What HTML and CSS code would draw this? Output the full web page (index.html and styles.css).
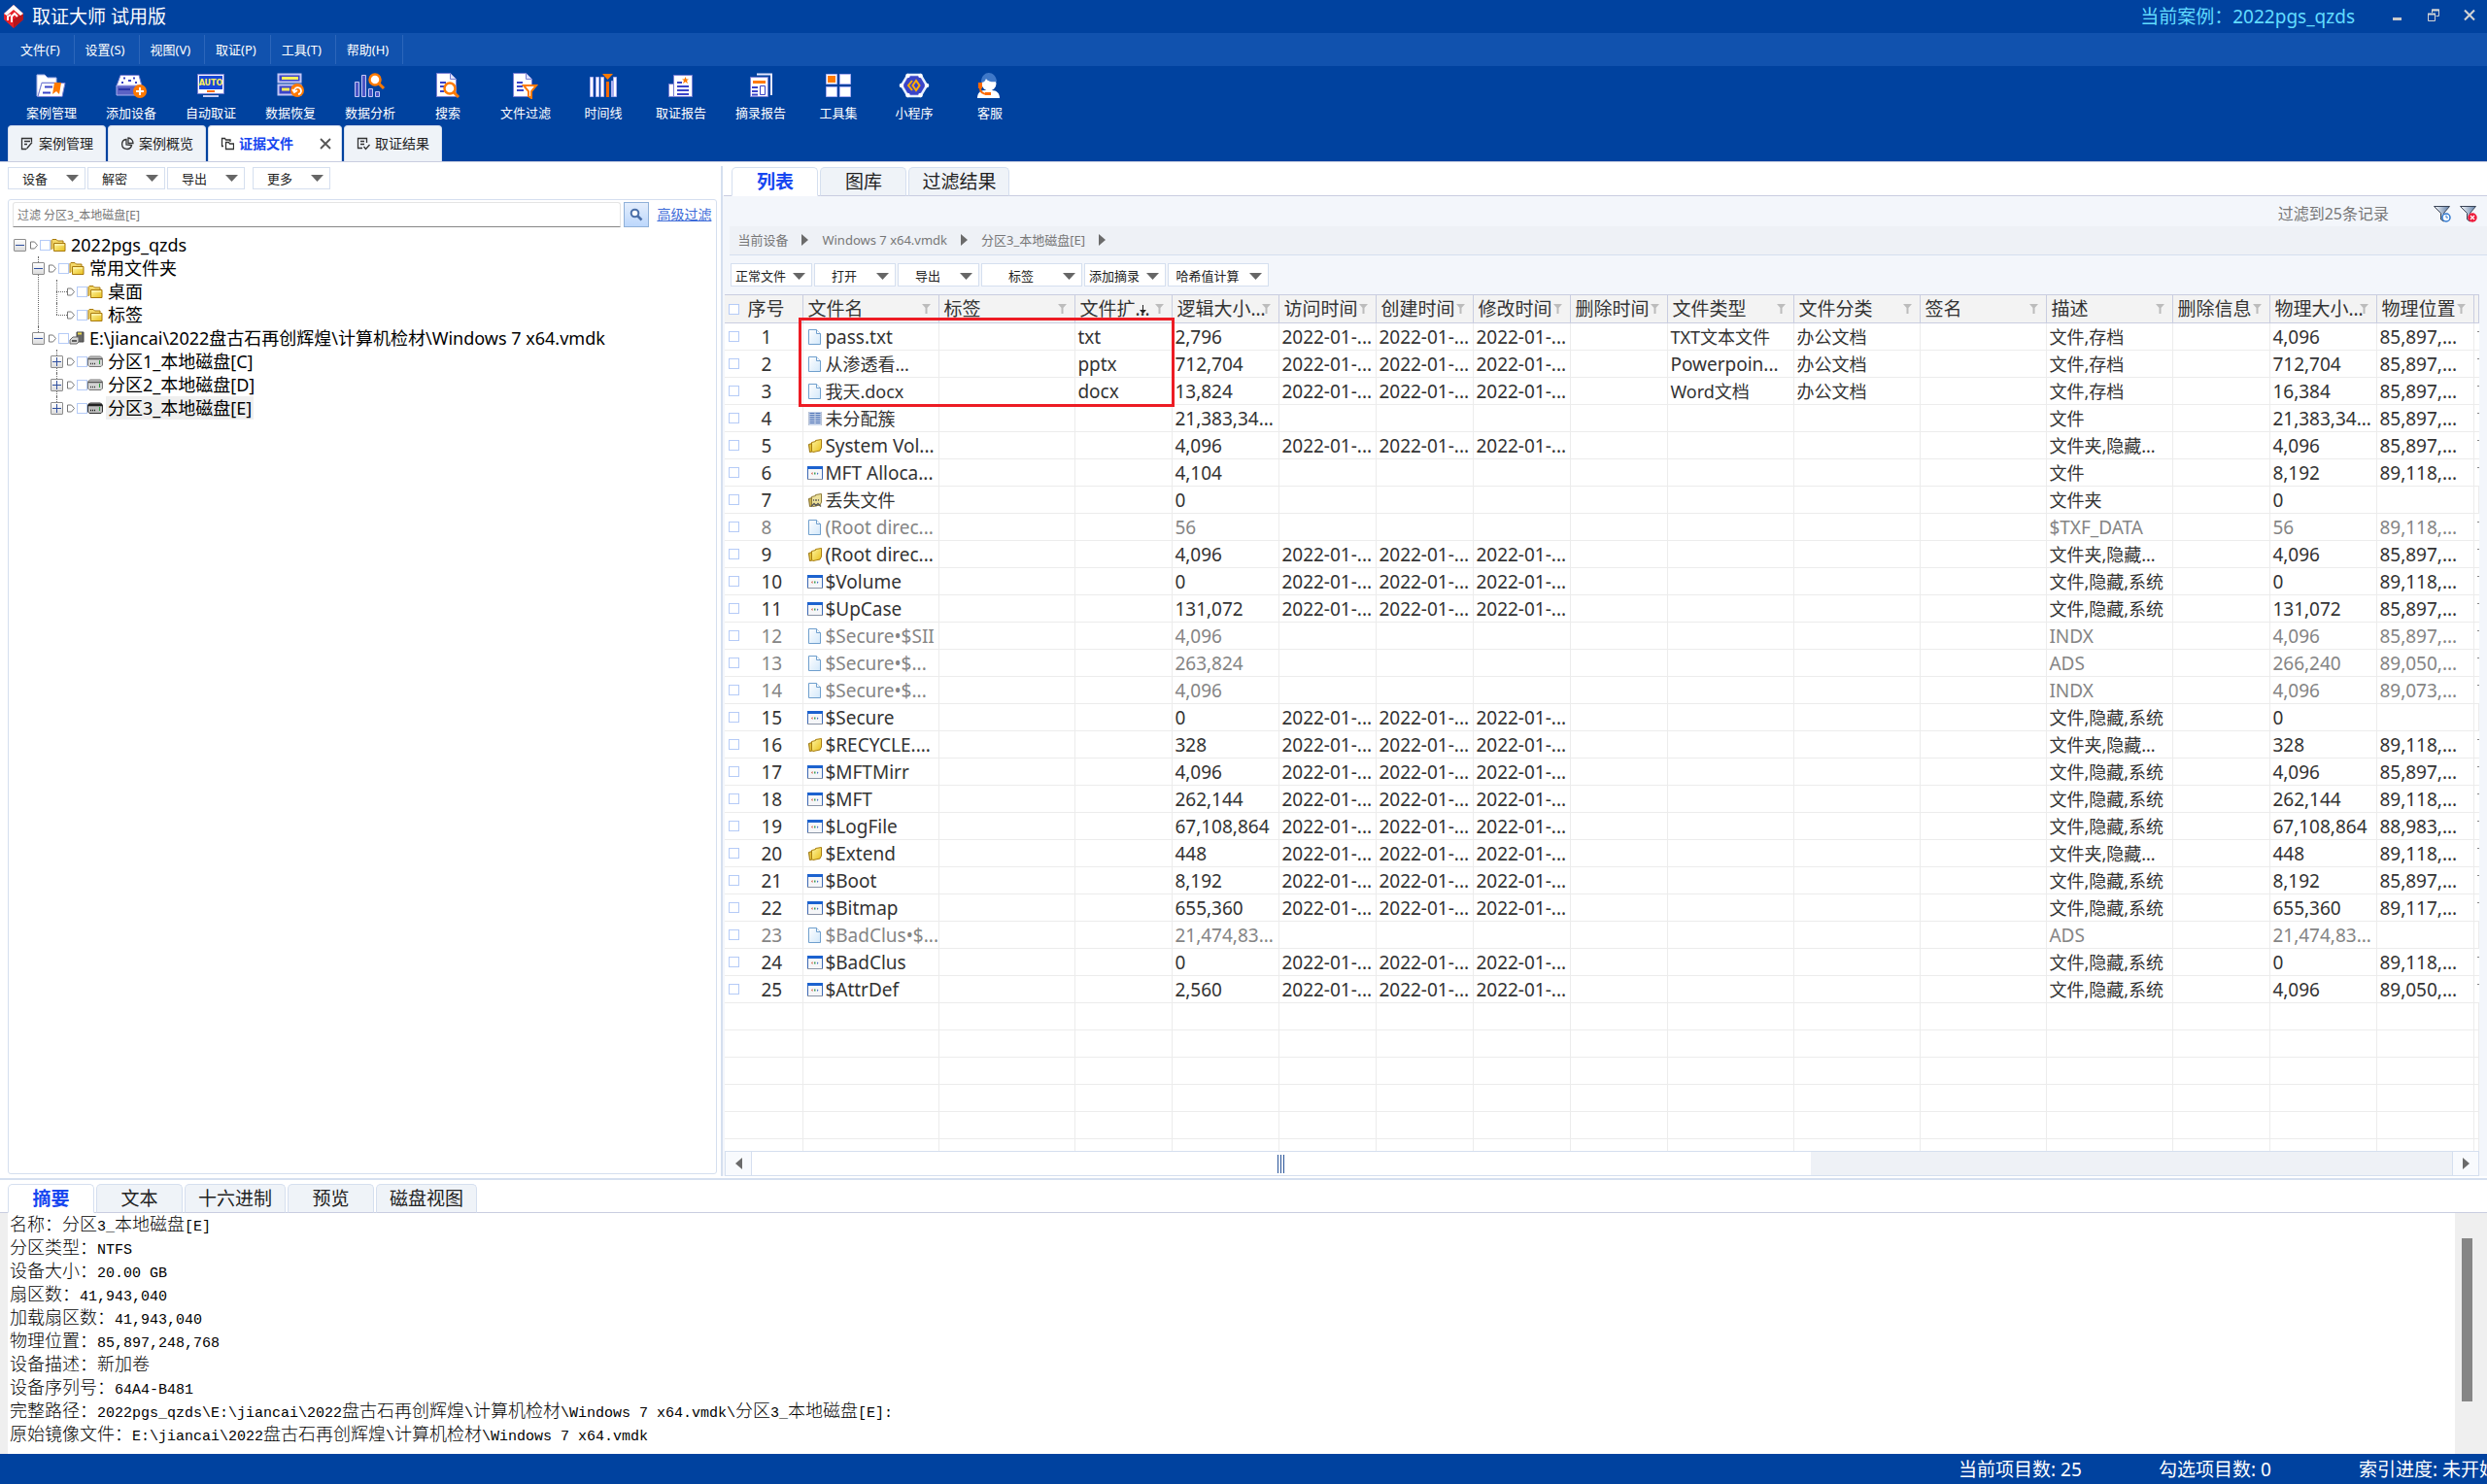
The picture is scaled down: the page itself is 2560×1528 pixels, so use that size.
FILE: index.html
```html
<!DOCTYPE html>
<html lang="zh-CN">
<head>
<meta charset="utf-8">
<title>取证大师 试用版</title>
<link rel="stylesheet" href="styles.css">
</head>
<body>
<svg class="defs" aria-hidden="true">
  <defs>
    <linearGradient id="gold" x1="0" y1="0" x2="1" y2="1"><stop offset="0" stop-color="#fff6a0"/><stop offset="1" stop-color="#e8bf1c"/></linearGradient>
    <linearGradient id="paper" x1="0" y1="0" x2="1" y2="1"><stop offset="0" stop-color="#ffffff"/><stop offset="1" stop-color="#d3e8fa"/></linearGradient>
    <linearGradient id="steel" x1="0" y1="0" x2="1" y2="0"><stop offset="0" stop-color="#ffffff"/><stop offset="1" stop-color="#5b7ba6"/></linearGradient>
  </defs>
  <symbol id="caret" viewBox="0 0 13 7"><path d="M0 0h13L6.5 7z" fill="#666"/></symbol>
  <symbol id="next" viewBox="0 0 7 12"><path d="M0 0l7 6-7 6z" fill="#6b6b6b"/></symbol>
  <symbol id="funnel" viewBox="0 0 9 10"><path d="M0 0h9L5.5 4v6h-2V4z" fill="#bcbcbc"/></symbol>
  <symbol id="flag" viewBox="0 0 8 9"><path d="M.5 1h4l3 3.500-3 3.500h-4z" fill="#fff" stroke="#777"/></symbol>
  <symbol id="folder" viewBox="0 0 16 14"><path d="M1 12V2.500l1-1h4l1.500 1.500H13v3" fill="#f3d768" stroke="#a8790c"/><path d="M3.500 5.500h11.500v8H3.500z" fill="url(#gold)" stroke="#a8790c"/><path d="M4.500 7h9.500" stroke="#fffbd0"/></symbol>
  <symbol id="disk" viewBox="0 0 16 12"><path d="M2.500 1h11L15.500 3v7l-1.500 1.500H2L.5 10V3z" fill="#d4d4d4" stroke="#777"/><path d="M1 3.500h14" stroke="#555" stroke-width="1.500"/><path d="M3 8.500h6" stroke="#333" stroke-width="1.500" stroke-dasharray="1 1"/><path d="M12.500 5v4" stroke="#2d9c3c"/></symbol>
  <symbol id="disk-dark" viewBox="0 0 16 12"><path d="M2.500 1h11L15.500 3v7l-1.500 1.500H2L.5 10V3z" fill="#bdbdbd" stroke="#333"/><path d="M1 3h14" stroke="#222" stroke-width="2.500"/><path d="M3 8.500h6" stroke="#111" stroke-width="1.500" stroke-dasharray="1 1"/><path d="M12.500 5v4" stroke="#2d9c3c"/></symbol>
  <symbol id="device" viewBox="0 0 16 14"><path d="M8 1h7v10H8z" fill="#666" stroke="#444"/><path d="M9 1.500h4v2H9z" fill="#ead94a"/><path d="M1 9l3-3h6v5l-2 2H1z" fill="#d6d6d6" stroke="#666"/><path d="M3 10h5" stroke="#333" stroke-width="1.500"/></symbol>
  <symbol id="f-doc" viewBox="0 0 16 16"><path d="M1.500.5h8l4 4v11h-12z" fill="url(#paper)" stroke="#6f9fcd"/><path d="M9.500.5v4h4" fill="#fff" stroke="#6f9fcd"/></symbol>
  <symbol id="f-list" viewBox="0 0 16 16"><path d="M1 1h14v14H1z" fill="#c9d5ea"/><path d="M2.500 2.500h5M2.500 4.500h5M2.500 6.500h5M2.500 8.500h5M2.500 10.500h5M2.500 12.500h5M8.500 2.500h5M8.500 4.500h5M8.500 6.500h5M8.500 8.500h5M8.500 10.500h5M8.500 12.500h5" stroke="#4d72b6"/><path d="M1.500 1v14M14.500 1v14" stroke="#b7c2d6"/></symbol>
  <symbol id="f-folder" viewBox="0 0 16 16"><path d="M1.500 6.500l3.500-1v8.500l-2.500.5z" fill="#e7c33a" stroke="#9a7510"/><path d="M4.500 4.500l4-1V2.500l6-1v8.500l-1.500 3-7 1.500-1.500-1z" fill="url(#gold)" stroke="#a87d0e"/></symbol>
  <symbol id="f-lost" viewBox="0 0 16 16"><path d="M1.500 6.500l3.500-1v8.500l-2.500.5z" fill="#cdb452" stroke="#857030"/><path d="M4.500 4.500l4-1V2.500l6-1v8.500l-1.500 3-7 1.500-1.500-1z" fill="#ece09a" stroke="#8e7b38"/><path d="M6 8h1M9 7v2M11 8h1M4 14.500l3-3 2 2 2-2 3 3" stroke="#555" fill="none" stroke-width="1.300"/></symbol>
  <symbol id="f-sys" viewBox="0 0 16 16"><path d="M.5 1.500h15v13H.5z" fill="#f5f6f8" stroke="#3c68b4"/><path d="M0 2.500h16" stroke="#1c62cf" stroke-width="3"/><path d="M0 14.500h16" stroke="#8a94a6"/><path d="M5.500 7L4 8.500 5.500 10z" fill="#d2553e"/><path d="M7 7.500h1.500v2H7z" fill="#3d9c55"/><path d="M10 7.500l1.500 1L10 10z" fill="#4068c8"/></symbol>
</svg>

<header class="app-head">
  <div class="titlebar">
    <svg class="logo" viewBox="0 0 20 24"><path d="M10 0l10 9v6L10 24 0 15V9z" fill="#e62129"/><path d="M10 15l10-7v7l-10 9z" fill="#b5161c"/><path d="M10 0l10 9-3 2-7-6-7 6-3-2z" fill="#fff"/><path d="M4 16v-4l3-2M8 18v-6l3-3 3 3" fill="none" stroke="#fff" stroke-width="2"/></svg>
    <h1>取证大师 试用版</h1>
    <p class="current-case">当前案例：2022pgs_qzds</p>
    <div class="win-buttons">
      <button aria-label="最小化"><svg width="12" height="13" viewBox="0 0 12 13"><path d="M1 9h9v3H1z" fill="#c9c9c9"/></svg></button>
      <button aria-label="还原"><svg width="12" height="13" viewBox="0 0 12 13"><path d="M4.500 4V1h7v6.500h-3" fill="none" stroke="#d5d5d5"/><path d="M4 1.500h8" stroke="#d5d5d5" stroke-width="2"/><path d="M.5 5.500h7v7h-7z" fill="none" stroke="#d5d5d5"/><path d="M0 5.500h8" stroke="#d5d5d5" stroke-width="2"/></svg></button>
      <button aria-label="关闭"><svg width="12" height="13" viewBox="0 0 12 13"><path d="M1 1.500l10 10M11 1.500l-10 10" stroke="#d5d5d5" stroke-width="2"/></svg></button>
    </div>
  </div>
  <nav class="menubar">
    <button>文件(F)</button><button>设置(S)</button><button>视图(V)</button><button>取证(P)</button><button>工具(T)</button><button>帮助(H)</button>
  </nav>
  <div class="toolbar">
    <button><svg viewBox="0 0 32 28"><path d="M1 3h8l3 3h9v5H6L2 25H1z" fill="#fff" stroke="#aab4ea"/><path d="M6 11.500h24l-3 14H2z" fill="#fff" stroke="#7a80d4"/><path d="M9 15.500h8M7 21.500h8" stroke="#3a44c8" stroke-width="2"/><path d="M19 11h7l-2 12-3-3-4 3z" fill="#ff7a00"/></svg>案例管理</button>
    <button><svg viewBox="0 0 32 28"><path d="M5 3.500h19l3 11H1z" fill="#fff" stroke="#7a80d4"/><path d="M1 14h26v10H1z" fill="#5b62c4" stroke="#a9aef0"/><path d="M3 18h12" stroke="#2b35a8" stroke-width="2"/><path d="M8 6.500h2M18 6.500h2M6 11h2M20 11h2M13 9h3" stroke="#3a44c8" stroke-width="2"/><circle cx="25" cy="20" r="7" fill="#ff7a00"/><path d="M25 16v8M21 20h8" stroke="#fff" stroke-width="2"/></svg>添加设备</button>
    <button><svg viewBox="0 0 32 28"><path d="M2.500 2.500h27v20h-27z" fill="#fff" stroke="#7a80d4"/><path d="M4 4h24v14H4z" fill="#1747d8"/><text x="16" y="14" class="auto-text">AUTO</text><path d="M12 19h8v2h-8z" fill="#ff6a00"/><path d="M8 25h16" stroke="#c9cdf5" stroke-width="2"/></svg>自动取证</button>
    <button><svg viewBox="0 0 32 28"><path d="M3.500 2.500h23v8h-23zM3.500 13.500h23v10h-23z" fill="#3a44c8" stroke="#c3c6f5" stroke-width="2"/><path d="M7 6.500h17M7 18h8" stroke="#fff05a" stroke-width="3"/><circle cx="23" cy="19" r="7" fill="#ff7a00"/><path d="M20 20a3.500 3.500 0 1 1 4 3M18 18l2 3 3-2" fill="none" stroke="#fff" stroke-width="1.800"/></svg>数据恢复</button>
    <button><svg viewBox="0 0 32 28"><path d="M0.500 10.500h4v15h-4zM7.500 3.500h4v22h-4zM14.500 17.500h4v8h-4zM21.500 20.500h4v5h-4z" fill="#4a55c4" stroke="#c3c6f5"/><circle cx="21" cy="8" r="5.500" fill="#fff" stroke="#ff7a00" stroke-width="2.500"/><path d="M25 12l5 5" stroke="#ff7a00" stroke-width="3"/></svg>数据分析</button>
    <button><svg viewBox="0 0 32 28"><path d="M4.500 1.500h14l6 6v18h-20z" fill="#fff" stroke="#7a80d4"/><path d="M18.500 1.500v6h6" fill="#dfe2fb" stroke="#7a80d4"/><path d="M8 11h6M8 15h4M8 20h4" stroke="#3a44c8" stroke-width="2"/><circle cx="18" cy="17" r="5.500" fill="#fff" stroke="#ff7a00" stroke-width="2.500"/><path d="M22 21l5 5" stroke="#ff7a00" stroke-width="3"/></svg>搜索</button>
    <button><svg viewBox="0 0 32 28"><path d="M3.500 1.500h13l6 6v18h-19z" fill="#fff" stroke="#7a80d4"/><path d="M16.500 1.500v6h6" fill="#dfe2fb" stroke="#7a80d4"/><path d="M7 11h6M7 15h6M7 19h7" stroke="#3a44c8" stroke-width="2"/><path d="M14 14h13l-5 6v7l-3-2v-5z" fill="#fff" stroke="#ff7a00" stroke-width="2"/></svg>文件过滤</button>
    <button><svg viewBox="0 0 32 28"><path d="M2.500 5.500h3v20h-3zM8.500 5.500h3v20h-3zM13.500 5.500h3v20h-3zM24.500 9.500h1v16h-1zM26.500 5.500h3v20h-3z" fill="#fff" stroke="#a9aef0"/><path d="M19 10h3v16h-3z" fill="#ff6a00"/><path d="M15 2h11l-5.500 6z" fill="#ff7a00"/></svg>时间线</button>
    <button><svg viewBox="0 0 32 28"><path d="M3.500 12.500h5v13h-5z" fill="#fff" stroke="#7a80d4"/><path d="M8.500 3.500h19v22h-19z" fill="#fff" stroke="#7a80d4"/><path d="M12 11h5M12 15h12M12 19h12M12 23h12" stroke="#3a44c8" stroke-width="2"/><path d="M20.500 5l1 2.500h2.500l-2 1.500 1 3-2.500-1.700L18 12l1-3-2-1.500h2.500z" fill="#ff7a00"/></svg>取证报告</button>
    <button><svg viewBox="0 0 32 28"><path d="M12 2.500h15V24" fill="none" stroke="#e6e8ff" stroke-width="2"/><path d="M5.500 5.500h18v20h-18z" fill="#fff" stroke="#7a80d4"/><path d="M8 9h13v3H8z" fill="#ff7a00"/><path d="M7 16h6M7 20h6M7 23.500h6" stroke="#3a44c8" stroke-width="2"/><path d="M15.500 14.500h5v9h-5z" fill="#fff" stroke="#3a44c8"/></svg>摘录报告</button>
    <button><svg viewBox="0 0 32 28"><path d="M3.500 2.500h11v10h-11zM17.500 2.500h11v10h-11zM3.500 15.500h11v10h-11zM17.500 15.500h11v10h-11z" fill="#fff" stroke="#a9aef0"/><path d="M5 4h8v7H5z" fill="#ff7a00"/></svg>工具集</button>
    <button><svg viewBox="0 0 32 28"><path d="M9.500 3h13L29 14l-6.500 11h-13L3 14z" fill="#3a44c8" stroke="#e6f0ff" stroke-width="2.500"/><circle cx="9.500" cy="4" r="2.300" fill="#fff"/><circle cx="22.500" cy="4" r="2.300" fill="#fff"/><circle cx="29" cy="14" r="2.300" fill="#fff"/><circle cx="22.500" cy="24" r="2.300" fill="#fff"/><circle cx="9.500" cy="24" r="2.300" fill="#fff"/><circle cx="3" cy="14" r="2.300" fill="#fff"/><path d="M14 9l-4 5 4 5M18 9l-3.500 5 3.500 5 3.500-5z" fill="none" stroke="#ffae00" stroke-width="2"/></svg>小程序</button>
    <button><svg viewBox="0 0 32 28"><path d="M3 27c0-5 3-8 7-8h8c5 0 8 3 8 8z" fill="#fff"/><circle cx="15" cy="12" r="7.500" fill="#fff"/><path d="M7 11c0-13 15-13 16-1-6 1-10-1-11-3-1 3-3 4-5 4z" fill="#3f78c8"/><path d="M4 11h4v6H4z" fill="#ff6a00"/><path d="M6 17c0 4 3 6 8 6" fill="none" stroke="#ff6a00" stroke-width="2"/><path d="M11 21h6v3h-6z" fill="#ff6a00"/></svg>客服</button>
  </div>
  <div class="main-tabs" role="tablist">
    <button class="main-tab" role="tab"><svg viewBox="0 0 14 14"><path d="M11.500 5V1.500h-10v11H6M4 4.500h6M4 7.500h3" fill="none" stroke="#333" stroke-width="1.300"/><path d="M12.500 6l-5 6-1.500 1 .5-2 5-6z" fill="#333"/></svg>案例管理</button>
    <button class="main-tab" role="tab"><svg viewBox="0 0 14 14"><path d="M6 2.500a5 5 0 1 0 5.500 6L6 8z" fill="none" stroke="#333" stroke-width="1.300"/><path d="M8 1v5.500h5A5.500 5.500 0 0 0 8 1z" fill="none" stroke="#333" stroke-width="1.300"/></svg>案例概览</button>
    <button class="main-tab is-active" role="tab" aria-selected="true"><svg viewBox="0 0 14 14"><path d="M3 9.500H1.500v-8h3l1 1.500H10v2M5.500 12.500v-7h3l1 1.500h4v5.500z" fill="none" stroke="#333" stroke-width="1.300"/></svg>证据文件<svg class="tab-close" viewBox="0 0 12 12"><path d="M1 1l10 10M11 1L1 11" stroke="#555" stroke-width="1.800"/></svg></button>
    <button class="main-tab" role="tab"><svg viewBox="0 0 14 14"><path d="M10.500 6V1.500h-9v10H6M4 4.500h4M4 7.500h4M7.500 10l2 2.500L13.500 8" fill="none" stroke="#333" stroke-width="1.300"/></svg>取证结果</button>
  </div>
</header>

<main class="workspace">
  <section class="side">
    <div class="drop-row">
      <button class="drop">设备<svg><use href="#caret"/></svg></button>
      <button class="drop">解密<svg><use href="#caret"/></svg></button>
      <button class="drop">导出<svg><use href="#caret"/></svg></button>
      <button class="drop drop-more">更多<svg><use href="#caret"/></svg></button>
    </div>
    <div class="tree-panel">
      <form class="filter">
        <input type="text" placeholder="过滤 分区3_本地磁盘[E]" aria-label="过滤">
        <button type="button" aria-label="搜索"><svg width="14" height="14" viewBox="0 0 14 14"><circle cx="5.500" cy="5.500" r="3.800" fill="#fff" stroke="#4a6fa8" stroke-width="2"/><path d="M8.500 8.500l4 4" stroke="#4a6fa8" stroke-width="2.500"/></svg></button>
        <a href="#">高级过滤</a>
      </form>
      <ul class="tree">
        <li>
          <div class="node"><button class="toggle minus" aria-label="收起"></button><svg class="flag"><use href="#flag"/></svg><input type="checkbox" aria-label="2022pgs_qzds"><svg class="kind"><use href="#folder"/></svg><span>2022pgs_qzds</span></div>
          <ul>
            <li>
              <div class="node"><button class="toggle minus" aria-label="收起"></button><svg class="flag"><use href="#flag"/></svg><input type="checkbox" aria-label="常用文件夹"><svg class="kind"><use href="#folder"/></svg><span>常用文件夹</span></div>
              <ul>
                <li><div class="node"><i class="branch"></i><svg class="flag"><use href="#flag"/></svg><input type="checkbox" aria-label="桌面"><svg class="kind"><use href="#folder"/></svg><span>桌面</span></div></li>
                <li><div class="node"><i class="branch"></i><svg class="flag"><use href="#flag"/></svg><input type="checkbox" aria-label="标签"><svg class="kind"><use href="#folder"/></svg><span>标签</span></div></li>
              </ul>
            </li>
            <li>
              <div class="node"><button class="toggle minus" aria-label="收起"></button><svg class="flag"><use href="#flag"/></svg><input type="checkbox" aria-label="Windows 7 x64.vmdk"><svg class="kind"><use href="#device"/></svg><span>E:\jiancai\2022盘古石再创辉煌\计算机检材\Windows 7 x64.vmdk</span></div>
              <ul>
                <li><div class="node"><button class="toggle plus" aria-label="展开"></button><svg class="flag"><use href="#flag"/></svg><input type="checkbox" aria-label="分区1"><svg class="kind"><use href="#disk"/></svg><span>分区1_本地磁盘[C]</span></div></li>
                <li><div class="node"><button class="toggle plus" aria-label="展开"></button><svg class="flag"><use href="#flag"/></svg><input type="checkbox" aria-label="分区2"><svg class="kind"><use href="#disk"/></svg><span>分区2_本地磁盘[D]</span></div></li>
                <li><div class="node"><button class="toggle plus" aria-label="展开"></button><svg class="flag"><use href="#flag"/></svg><input type="checkbox" aria-label="分区3"><svg class="kind"><use href="#disk-dark"/></svg><span class="is-selected">分区3_本地磁盘[E]</span></div></li>
              </ul>
            </li>
          </ul>
        </li>
      </ul>
    </div>
  </section>

  <section class="content">
    <div class="tabs" role="tablist">
      <button class="tab is-active" role="tab" aria-selected="true">列表</button>
      <button class="tab" role="tab">图库</button>
      <button class="tab" role="tab">过滤结果</button>
    </div>
    <div class="filter-info">
      <span>过滤到25条记录</span>
      <button aria-label="过滤历史"><svg width="18" height="18" viewBox="0 0 18 18"><path d="M.5 1.500h16l-6 7V17l-3-2V8.500z" fill="url(#steel)" stroke="#3c4658"/><circle cx="13" cy="13" r="4" fill="#fff" stroke="#2f78d0" stroke-width="1.500"/><path d="M13 10.500V13h2" stroke="#2f78d0" fill="none"/></svg></button>
      <button aria-label="清除过滤"><svg width="18" height="18" viewBox="0 0 18 18"><path d="M.5 1.500h16l-6 7V17l-3-2V8.500z" fill="url(#steel)" stroke="#3c4658"/><circle cx="13" cy="13" r="4.700" fill="#ee1c3c"/><path d="M11 11l4 4M15 11l-4 4" stroke="#fff" stroke-width="1.300"/></svg></button>
    </div>
    <nav class="crumbs">
      <span>当前设备</span><svg><use href="#next"/></svg><span>Windows 7 x64.vmdk</span><svg><use href="#next"/></svg><span>分区3_本地磁盘[E]</span><svg><use href="#next"/></svg>
    </nav>
    <div class="drop-row table-actions">
      <button class="drop">正常文件<svg><use href="#caret"/></svg></button>
      <button class="drop">打开<svg><use href="#caret"/></svg></button>
      <button class="drop">导出<svg><use href="#caret"/></svg></button>
      <button class="drop drop-wide">标签<svg><use href="#caret"/></svg></button>
      <button class="drop">添加摘录<svg><use href="#caret"/></svg></button>
      <button class="drop drop-wide">哈希值计算<svg><use href="#caret"/></svg></button>
    </div>
    <div class="grid">
      <table>
        <colgroup id="cols"></colgroup>
        <thead><tr id="head"></tr></thead>
        <tbody id="rows"></tbody>
      </table>
      <div class="mark"></div>
    </div>
    <div class="hscroll">
      <button aria-label="向左"><svg class="flip"><use href="#next"/></svg></button>
      <div class="hscroll-track"><div class="hscroll-thumb"><i></i></div></div>
      <button aria-label="向右"><svg><use href="#next"/></svg></button>
    </div>
  </section>
</main>

<section class="detail">
  <div class="tabs" role="tablist">
    <button class="tab is-active" role="tab" aria-selected="true">摘要</button>
    <button class="tab" role="tab">文本</button>
    <button class="tab" role="tab">十六进制</button>
    <button class="tab" role="tab">预览</button>
    <button class="tab" role="tab">磁盘视图</button>
  </div>
  <div class="summary">
    <div class="summary-text">
      <p>名称：分区<b>3_</b>本地磁盘<b>[E]</b></p>
      <p>分区类型：<b>NTFS</b></p>
      <p>设备大小：<b>20.00 GB</b></p>
      <p>扇区数：<b>41,943,040</b></p>
      <p>加载扇区数：<b>41,943,040</b></p>
      <p>物理位置：<b>85,897,248,768</b></p>
      <p>设备描述：新加卷</p>
      <p>设备序列号：<b>64A4-B481</b></p>
      <p>完整路径：<b>2022pgs_qzds\E:\jiancai\2022</b>盘古石再创辉煌<b>\</b>计算机检材<b>\Windows 7 x64.vmdk\</b>分区<b>3_</b>本地磁盘<b>[E]:</b></p>
      <p>原始镜像文件：<b>E:\jiancai\2022</b>盘古石再创辉煌<b>\</b>计算机检材<b>\Windows 7 x64.vmdk</b></p>
    </div>
    <div class="vscroll"><i></i></div>
  </div>
</section>

<footer class="status">
  <span>当前项目数: 25</span><span>勾选项目数: 0</span><span>索引进度: 未开始</span>
</footer>
<script src="app.js"></script>
</body>
</html>
```
FILE: styles.css
```css
* { box-sizing: border-box; }

:root {
  --brand: #00429f;
  --brand-light: #1152ae;
  --line: #d5dfef;
  --line-dark: #c9cde0;
  --pane: #f3f6fb;
  --tab: #eff3f8;
  --link: #1646f0;
}

body {
  margin: 0;
  height: 100vh;
  display: flex;
  flex-direction: column;
  overflow: hidden;
  background: #fff;
  color: #222;
  font: 18px/24px "Noto Sans", "Noto Sans CJK SC", sans-serif;
}

button {
  margin: 0;
  padding: 0;
  border: 0;
  background: none;
  color: inherit;
  font: inherit;
}

h1, p, ul { margin: 0; padding: 0; }
svg { display: block; flex: none; }
.defs { position: absolute; width: 0; height: 0; }

input[type="checkbox"] {
  appearance: none;
  flex: none;
  display: block;
  width: 11px;
  height: 11px;
  margin: 0;
  border: 1px solid #b5cbf7;
  background: #fff;
}

/* header */
.app-head { background: var(--brand); color: #fff; }

.titlebar {
  display: flex;
  align-items: center;
  height: 34px;
  padding: 0 8px 0 4px;
  font-size: 19px;
}
.logo { width: 20px; height: 24px; margin-right: 9px; }
h1 { font-size: 19px; font-weight: 400; }
.current-case { margin-left: auto; color: #62dcff; }
.win-buttons { display: flex; gap: 25px; margin: 0 4px 4px 38px; }

.menubar {
  display: flex;
  height: 34px;
  padding: 2px 0 2px 10px;
  background: var(--brand-light);
  font-size: 13px;
}
.menubar button { padding: 0 14px 0 11px; border-right: 1px solid #2c66ba; }

.toolbar {
  display: flex;
  padding: 6px 12px 4px;
  font-size: 13px;
  line-height: 18px;
}
.toolbar button {
  display: flex;
  flex-direction: column;
  align-items: center;
  gap: 5px;
  min-width: 78px;
  padding: 0 15px;
}
.toolbar svg { width: 32px; height: 28px; }
.auto-text { font: bold 8px "DejaVu Sans", sans-serif; fill: #fff05a; text-anchor: middle; }

.main-tabs {
  display: flex;
  gap: 2px;
  padding: 0 8px;
  border-bottom: 1px solid var(--line-dark);
  font-size: 14px;
}
.main-tab {
  display: flex;
  align-items: center;
  gap: 5px;
  height: 37px;
  padding: 0 12px;
  border: 1px solid var(--line);
  border-bottom: 0;
  border-radius: 4px 4px 0 0;
  background: var(--tab);
  color: #222;
}
.main-tab svg { width: 14px; height: 14px; }
.main-tab.is-active { background: #fff; color: var(--link); font-weight: 700; padding-right: 10px; }
.main-tab .tab-close { width: 12px; height: 12px; margin-left: 22px; }

/* shared drop-down buttons */
.drop-row { display: flex; gap: 2px; font-size: 13px; }
.drop {
  display: flex;
  align-items: center;
  justify-content: space-between;
  width: 80px;
  height: 23px;
  padding: 0 6px 0 14px;
  border: 1px solid var(--line);
  background: #fff;
  white-space: nowrap;
}
.drop svg { width: 13px; height: 7px; }
.drop-more { margin-left: 6px; }

/* shared tabs */
.tabs {
  display: flex;
  gap: 2px;
  height: 30px;
  padding: 0 8px;
  border-bottom: 1px solid var(--line-dark);
  font-size: 19px;
}
.tab {
  height: 30px;
  min-width: 89px;
  padding: 0 13px;
  border: 1px solid var(--line);
  border-bottom-color: var(--line-dark);
  border-radius: 5px 5px 0 0;
  background: var(--tab);
}
.tab.is-active { border-bottom-color: #fff; background: #fff; color: var(--link); font-weight: 700; }

/* workspace */
.workspace {
  flex: 1;
  min-height: 0;
  display: grid;
  grid-template-columns: 29% 1fr;
  grid-template-rows: minmax(0, 1fr);
  padding-bottom: 2px;
}

.side {
  display: flex;
  flex-direction: column;
  padding: 5px 4px 2px 8px;
}
.tree-panel {
  flex: 1;
  margin-top: 10px;
  border: 1px solid var(--line);
  border-radius: 3px;
}
.filter { display: flex; gap: 3px; padding: 2px 5px 0 4px; font-size: 14px; line-height: 26px; }
.filter input {
  flex: 1;
  height: 26px;
  padding: 0 4px;
  border: 1px solid #e4e4e4;
  border-bottom-color: #868686;
  border-radius: 3px 3px 0 0;
  font: 12px "Noto Sans", "Noto Sans CJK SC", sans-serif;
}
.filter input::placeholder { color: #777; }
.filter button {
  display: grid;
  place-items: center;
  width: 26px;
  height: 26px;
  border: 1px solid #8fb0d8;
  background: linear-gradient(#e4eefc, #bcd7fc);
}
.filter a { margin-left: 5px; color: #3c6ad8; }

.tree, .tree ul { list-style: none; }
.tree { padding: 6px 0 0 5px; color: #000; }
.tree ul { padding-left: 19px; }
.tree li { position: relative; }
.tree ul > li::before {
  content: "";
  position: absolute;
  left: 6px;
  top: 0;
  height: 100%;
  border-left: 1px dotted #666;
}
.tree ul > li:last-child::before { height: 12px; }
.node { position: relative; display: flex; align-items: center; height: 24px; }
.node span { padding: 0 2px; white-space: nowrap; }
.node span.is-selected { background: #efefef; }
.toggle {
  width: 13px;
  height: 13px;
  margin-right: 4px;
  border: 1px solid #8c8c8c;
  border-radius: 1px;
}
.minus { background: linear-gradient(#3050a0, #3050a0) 50% 50% / 9px 1px no-repeat, linear-gradient(#fff, #dcdcdc); }
.plus { background: linear-gradient(#3050a0, #3050a0) 50% 50% / 9px 1px no-repeat, linear-gradient(#3050a0, #3050a0) 50% 50% / 1px 9px no-repeat, linear-gradient(#fff, #dcdcdc); }
.branch { width: 11px; margin-left: 6px; border-top: 1px dotted #666; }
.flag { width: 8px; height: 9px; margin-right: 2px; }
.kind { width: 16px; height: 14px; margin-right: 3px; }

/* list pane */
.content {
  display: flex;
  flex-direction: column;
  min-width: 0;
  margin-top: 4px;
  border-left: 2px solid var(--line);
  background: linear-gradient(#fff, #fff) 0 0 / 100% 30px no-repeat, var(--pane);
}
.content > .tabs { margin: 1px 0 0 1px; }

.filter-info {
  display: flex;
  align-items: center;
  justify-content: flex-end;
  gap: 9px;
  height: 31px;
  padding: 4px 10px 0;
  color: #777;
  font-size: 16px;
}
.filter-info span { margin-right: 37px; }

.crumbs {
  display: flex;
  align-items: center;
  gap: 14px;
  height: 30px;
  margin-left: 7px;
  padding: 0 0 2px 8px;
  border-bottom: 1px solid var(--line);
  background: #eef1f6;
  color: #777;
  font-size: 13px;
}
.crumbs svg { width: 7px; height: 12px; }

.table-actions { padding: 8px; }
.table-actions .drop {
  display: grid;
  grid-template-columns: 1fr 13px;
  gap: 4px;
  justify-items: center;
  width: 84px;
  height: 24px;
  padding: 0 6px 0 0;
}
.table-actions .drop-wide { width: 104px; }

.grid {
  position: relative;
  flex: 1;
  min-height: 0;
  margin: 0 8px 0 2px;
  overflow: hidden;
  background: #fff;
}
table { width: 100%; table-layout: fixed; border-collapse: separate; border-spacing: 0; color: #333; }
th, td {
  height: 28px;
  padding: 0 0 0 2px;
  border-right: 1px solid #ececec;
  border-bottom: 1px solid #ececec;
  font-weight: 400;
  text-align: left;
  white-space: nowrap;
}
td { overflow: hidden; line-height: 26px; }
th {
  position: relative;
  height: 30px;
  padding: 0 8px 0 4px;
  border-color: var(--line-dark);
  border-top: 1px solid var(--line-dark);
  background: #f3f3f3;
  font-size: 19px;
}
th div { display: flex; align-items: center; justify-content: space-between; }
th span { min-width: 0; }
th .funnel { width: 9px; height: 10px; }
th .sort { position: absolute; right: 26px; top: 10px; width: 7px; height: 10px; }
th:first-child div, .index { display: flex; align-items: center; justify-content: flex-start; }
th:first-child div { gap: 8px; }
.index { gap: 22px; padding-left: 2px; }
.name { display: flex; align-items: center; gap: 2px; padding-left: 2px; }
.name svg { width: 16px; height: 16px; }
.latin { font-size: 19px; }
.is-dim { color: #858585; }
/* first pixels of the next column, which starts at the pane's edge */
.peek { background: linear-gradient(#888, #888) 100% 8px / 2px 1px no-repeat; border-right: 0; }
.mark {
  position: absolute;
  left: 76px;
  top: 24px;
  width: 387px;
  height: 92px;
  border: 3px solid #ed1c24;
}

.hscroll { display: flex; height: 26px; margin: 0 8px 0 2px; border: 1px solid var(--line); }
.hscroll button { display: grid; place-items: center; width: 26px; background: #f8fafd; }
.hscroll svg { width: 7px; height: 12px; }
.flip { transform: rotate(180deg); }
.hscroll-track {
  flex: 1;
  display: grid;
  grid-template-columns: 1090fr 661fr;
  border: 1px solid var(--line);
  border-width: 0 1px;
  background: #eef1f6;
}
.hscroll-thumb { display: grid; place-items: center; background: #fff; }
.hscroll-thumb i { width: 7px; height: 19px; border: 1px solid #2a5599; border-width: 0 1px; background: linear-gradient(#2a5599, #2a5599) 50% 0 / 1px 100% no-repeat; }

/* detail pane */
.detail { padding-top: 4px; border-top: 2px solid var(--line); }
.summary { display: flex; border-left: 8px solid #efefef; }
.summary-text {
  flex: 1;
  padding: 0 2px 8px;
  color: #000;
  font-family: "Liberation Serif", "Noto Sans CJK SC", serif;
  font-weight: 300;
}
.summary-text b { font: 15px "Liberation Mono", monospace; }
.vscroll { width: 33px; padding: 26px 15px 54px 7px; background: #efefef; }
.vscroll i { display: block; height: 100%; background: #868686; }

.status {
  display: grid;
  grid-template-columns: repeat(3, 206px);
  justify-content: end;
  align-items: center;
  height: 31px;
  margin-right: -74px;
  background: var(--brand);
  color: #fff;
  font-size: 19px;
  white-space: nowrap;
}
```
FILE: app.js
```js
// Column titles and widths; the last column takes what is left.
const columns = [
  ["序号", 81], ["文件名", 140], ["标签", 140], ["文件扩...", 100], ["逻辑大小...", 110],
  ["访问时间", 100], ["创建时间", 100], ["修改时间", 100], ["删除时间", 100],
  ["文件类型", 130], ["文件分类", 130], ["签名", 130], ["描述", 130],
  ["删除信息", 100], ["物理大小...", 110], ["物理位置", 100], ["", 0]
];

// icon, name, extension, logical size, has dates, type, category, description, physical size, position, dimmed
const files = [
  ["doc", "pass.txt", "txt", "2,796", 1, "TXT文本文件", "办公文档", "文件,存档", "4,096", "85,897,..."],
  ["doc", "从渗透看...", "pptx", "712,704", 1, "Powerpoin...", "办公文档", "文件,存档", "712,704", "85,897,..."],
  ["doc", "我天.docx", "docx", "13,824", 1, "Word文档", "办公文档", "文件,存档", "16,384", "85,897,..."],
  ["list", "未分配簇", "", "21,383,34...", 0, "", "", "文件", "21,383,34...", "85,897,..."],
  ["folder", "System Vol...", "", "4,096", 1, "", "", "文件夹,隐藏...", "4,096", "85,897,..."],
  ["sys", "MFT Alloca...", "", "4,104", 0, "", "", "文件", "8,192", "89,118,..."],
  ["lost", "丢失文件", "", "0", 0, "", "", "文件夹", "0", ""],
  ["doc", "(Root direc...", "", "56", 0, "", "", "$TXF_DATA", "56", "89,118,...", 1],
  ["folder", "(Root direc...", "", "4,096", 1, "", "", "文件夹,隐藏...", "4,096", "85,897,..."],
  ["sys", "$Volume", "", "0", 1, "", "", "文件,隐藏,系统", "0", "89,118,..."],
  ["sys", "$UpCase", "", "131,072", 1, "", "", "文件,隐藏,系统", "131,072", "85,897,..."],
  ["doc", "$Secure•$SII", "", "4,096", 0, "", "", "INDX", "4,096", "85,897,...", 1],
  ["doc", "$Secure•$...", "", "263,824", 0, "", "", "ADS", "266,240", "89,050,...", 1],
  ["doc", "$Secure•$...", "", "4,096", 0, "", "", "INDX", "4,096", "89,073,...", 1],
  ["sys", "$Secure", "", "0", 1, "", "", "文件,隐藏,系统", "0", ""],
  ["folder", "$RECYCLE....", "", "328", 1, "", "", "文件夹,隐藏...", "328", "89,118,..."],
  ["sys", "$MFTMirr", "", "4,096", 1, "", "", "文件,隐藏,系统", "4,096", "85,897,..."],
  ["sys", "$MFT", "", "262,144", 1, "", "", "文件,隐藏,系统", "262,144", "89,118,..."],
  ["sys", "$LogFile", "", "67,108,864", 1, "", "", "文件,隐藏,系统", "67,108,864", "88,983,..."],
  ["folder", "$Extend", "", "448", 1, "", "", "文件夹,隐藏...", "448", "89,118,..."],
  ["sys", "$Boot", "", "8,192", 1, "", "", "文件,隐藏,系统", "8,192", "85,897,..."],
  ["sys", "$Bitmap", "", "655,360", 1, "", "", "文件,隐藏,系统", "655,360", "89,117,..."],
  ["doc", "$BadClus•$...", "", "21,474,83...", 0, "", "", "ADS", "21,474,83...", "", 1],
  ["sys", "$BadClus", "", "0", 1, "", "", "文件,隐藏,系统", "0", "89,118,..."],
  ["sys", "$AttrDef", "", "2,560", 1, "", "", "文件,隐藏,系统", "4,096", "89,050,..."]
];

const spareRows = 12;
const funnel = '<svg class="funnel"><use href="#funnel"/></svg>';
const sort = '<svg class="sort" viewBox="0 0 7 10"><path d="M3.500 0v6" stroke="#222"/><path d="M0 5h7L3.500 9z" fill="#222"/></svg>';

document.getElementById("cols").innerHTML = columns
  .map(([, width]) => (width ? `<col style="width:${width}px">` : "<col>")).join("");

document.getElementById("head").innerHTML = columns.map(([title], i) => {
  if (i === 0) return `<th><div><input type="checkbox" aria-label="全选"><span>${title}</span></div></th>`;
  if (!title) return "<th></th>";
  return `<th><div><span>${title}</span>${i === 3 ? sort : ""}${funnel}</div></th>`;
}).join("");

const isLatin = text => /^[\x20-\x7e•]+$/.test(text);
const cell = text => `<td${isLatin(text) ? ' class="latin"' : ""}>${text}</td>`;

const rows = files.map((f, i) => {
  const [icon, name, ext, size, dated, type, category, about, physical, position, dim] = f;
  const date = dated ? "2022-01-..." : "";
  const rest = ["", ext, size, date, date, date, "", type, category, "", about, "", physical, position];
  return `<tr${dim ? ' class="is-dim"' : ""}>` +
    `<td><div class="index latin"><input type="checkbox" aria-label="${name}">${i + 1}</div></td>` +
    `<td><div class="name${isLatin(name) ? " latin" : ""}"><svg><use href="#f-${icon}"/></svg>${name}</div></td>` +
    rest.map(cell).join("") + `<td${position ? ' class="peek"' : ""}></td></tr>`;
});

const spare = "<tr>" + "<td></td>".repeat(columns.length) + "</tr>";
document.getElementById("rows").innerHTML = rows.join("") + spare.repeat(spareRows);
```
